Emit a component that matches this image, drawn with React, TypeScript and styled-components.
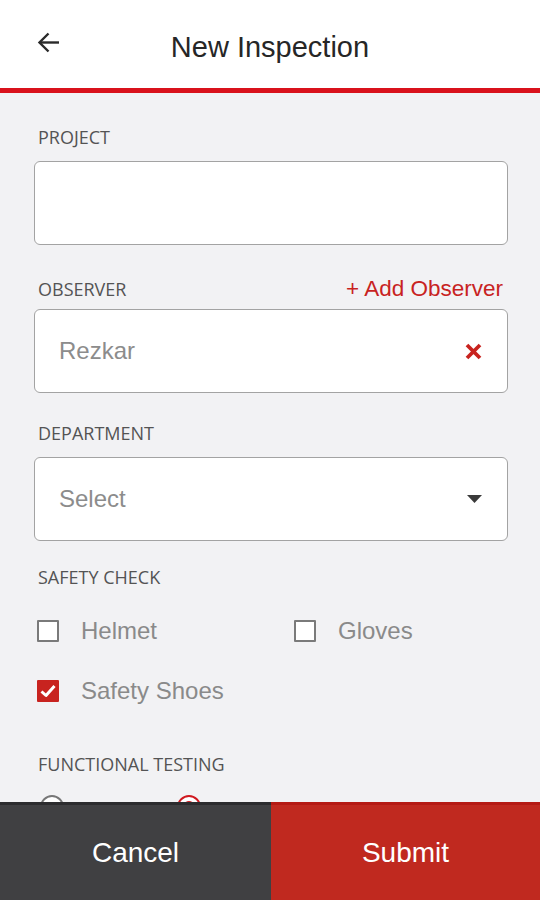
import React from 'react'
import styled, { createGlobalStyle } from 'styled-components'

const RED = '#c8231f'

const GlobalStyle = createGlobalStyle`
  html, body {
    margin: 0;
    padding: 0;
  }
  body {
    background: #f2f2f4;
    font-family: "Liberation Sans", Arial, sans-serif;
  }
  * {
    box-sizing: border-box;
  }
`

const Screen = styled.div`
  display: flex;
  flex-direction: column;
  height: 100vh;
  overflow: hidden;
  background: #f2f2f4;
`

const Header = styled.header`
  flex: 0 0 auto;
  height: 93px;
  display: grid;
  grid-template-columns: 22px 1fr 22px;
  align-items: center;
  padding: 0 37px;
  background: #fff;
  border-bottom: 5px solid #d9121c;
`

const BackButton = styled.button`
  display: flex;
  padding: 0;
  margin: 0 0 3px;
  border: none;
  background: none;
  color: #2a2a2a;
  cursor: pointer;
`

const Title = styled.h1`
  margin: 0;
  padding-top: 6px;
  font-size: 29px;
  font-weight: 400;
  color: #262626;
  text-align: center;
`

const Body = styled.main`
  flex: 1;
  overflow: hidden;
  padding: 32px 32px 0 34px;
`

const Field = styled.section<{ $spacing: number }>`
  margin-bottom: ${(p) => p.$spacing}px;
`

const LabelRow = styled.div<{ $shift?: number }>`
  display: flex;
  align-items: center;
  justify-content: space-between;
  padding-top: ${(p) => p.$shift ?? 0}px;
  margin-bottom: ${(p) => 12 - (p.$shift ?? 0)}px;
`

const Label = styled.div`
  padding-left: 4px;
  font-family: "Open Sans", "Liberation Sans", sans-serif;
  font-size: 18px;
  line-height: 24px;
  color: #545454;
`

const AddLink = styled.button`
  padding: 0 5px 0 0;
  border: none;
  background: none;
  font-family: "Liberation Sans", Arial, sans-serif;
  font-size: 22.5px;
  line-height: 24px;
  color: ${RED};
  cursor: pointer;
`

const InputBox = styled.div`
  display: flex;
  align-items: center;
  justify-content: space-between;
  height: 84px;
  padding: 0 25px 0 24px;
  background: #fff;
  border: 1.5px solid #a3a3a3;
  border-radius: 6px;
  font-size: 24px;
  color: #8c8c8c;
`

const CheckGrid = styled.div`
  display: grid;
  grid-template-columns: 257px 1fr;
  row-gap: 16px;
  margin-top: 20px;
  padding-left: 3px;
`

const CheckOption = styled.label`
  display: flex;
  align-items: center;
  gap: 22px;
  height: 44px;
  font-size: 24px;
  color: #8a8a8a;
`

const CheckBox = styled.span<{ $checked?: boolean }>`
  display: flex;
  align-items: center;
  justify-content: center;
  width: 22px;
  height: 22px;
  border: 2px solid ${(p) => (p.$checked ? RED : '#7a7a7a')};
  border-radius: 1px;
  background: ${(p) => (p.$checked ? RED : '#fff')};
`

const SectionLabel = styled(Label)`
  margin-top: 39px;
`

const RadioRow = styled.div`
  display: flex;
  margin-top: 19px;
  padding-left: 6px;
`

const RadioOption = styled.span`
  display: flex;
  width: 137px;
`

const Radio = styled.span<{ $checked?: boolean }>`
  display: flex;
  align-items: center;
  justify-content: center;
  width: 24px;
  height: 24px;
  border-radius: 50%;
  border: 2px solid ${(p) => (p.$checked ? '#d0191f' : '#777')};
  background: #fff;

  &::after {
    content: '';
    display: ${(p) => (p.$checked ? 'block' : 'none')};
    width: 12px;
    height: 12px;
    border-radius: 50%;
    background: #d0191f;
  }
`

const Footer = styled.footer`
  flex: 0 0 auto;
  display: grid;
  grid-template-columns: 271px 1fr;
  height: 98px;
`

const FooterButton = styled.button<{ $primary?: boolean }>`
  border: none;
  border-top: 3px solid ${(p) => (p.$primary ? '#b51a14' : '#2c2c2e')};
  background: ${(p) => (p.$primary ? '#c0291f' : '#404042')};
  color: #fff;
  font-family: "Liberation Sans", Arial, sans-serif;
  font-size: 28px;
  cursor: pointer;
`

const ArrowLeft = () => (
  <svg width="22" height="21" viewBox="0 0 22 21" fill="none" stroke="currentColor" strokeWidth="2.4">
    <path d="M22 10.5H2.5" />
    <path d="M11.5 1.5L2.5 10.5L11.5 19.5" />
  </svg>
)

const ClearIcon = () => (
  <svg width="17" height="17" viewBox="0 0 17 17" stroke={RED} strokeWidth="3.8">
    <path d="M2 2L15 15M15 2L2 15" />
  </svg>
)

const Caret = () => (
  <svg width="15" height="8" viewBox="0 0 15 8">
    <path d="M0 0H15L7.5 8Z" fill="#3a3a3a" />
  </svg>
)

const Tick = () => (
  <svg width="16" height="14" viewBox="0 0 16 14" fill="none" stroke="#fff" strokeWidth="3" strokeLinejoin="round">
    <path d="M1.5 7.5L6 11.5L14.5 2" />
  </svg>
)

const checks = [
  { label: 'Helmet', checked: false },
  { label: 'Gloves', checked: false },
  { label: 'Safety Shoes', checked: true },
]

export default function App() {
  return (
    <>
      <GlobalStyle />
      <Screen>
        <Header>
          <BackButton aria-label="Back">
            <ArrowLeft />
          </BackButton>
          <Title>New Inspection</Title>
          <span />
        </Header>

        <Body>
          <Field $spacing={28}>
            <LabelRow>
              <Label>PROJECT</Label>
            </LabelRow>
            <InputBox />
          </Field>

          <Field $spacing={28}>
            <LabelRow $shift={4}>
              <Label>OBSERVER</Label>
              <AddLink>+ Add Observer</AddLink>
            </LabelRow>
            <InputBox>
              Rezkar
              <ClearIcon />
            </InputBox>
          </Field>

          <Field $spacing={24}>
            <LabelRow>
              <Label>DEPARTMENT</Label>
            </LabelRow>
            <InputBox>
              Select
              <Caret />
            </InputBox>
          </Field>

          <Label>SAFETY CHECK</Label>
          <CheckGrid>
            {checks.map((c) => (
              <CheckOption key={c.label}>
                <CheckBox $checked={c.checked}>{c.checked && <Tick />}</CheckBox>
                {c.label}
              </CheckOption>
            ))}
          </CheckGrid>

          <SectionLabel>FUNCTIONAL TESTING</SectionLabel>
          <RadioRow>
            <RadioOption>
              <Radio />
            </RadioOption>
            <RadioOption>
              <Radio $checked />
            </RadioOption>
          </RadioRow>
        </Body>

        <Footer>
          <FooterButton>Cancel</FooterButton>
          <FooterButton $primary>Submit</FooterButton>
        </Footer>
      </Screen>
    </>
  )
}
